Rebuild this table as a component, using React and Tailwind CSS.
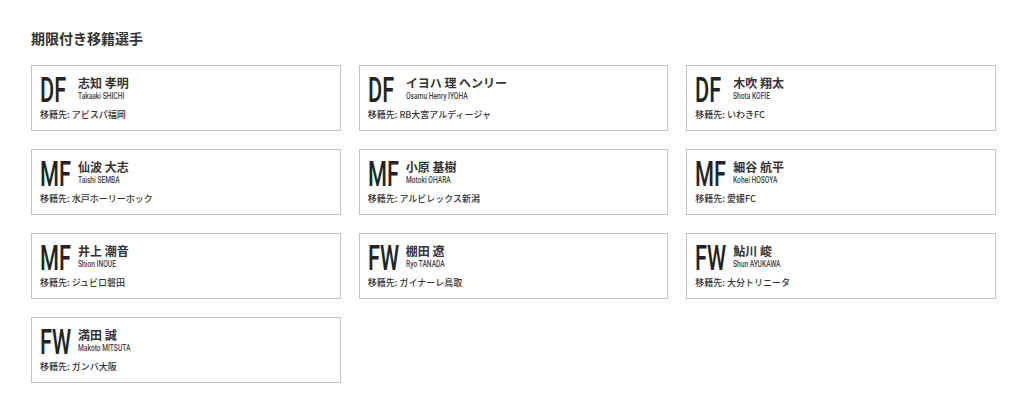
import React from "react";

const players = [
  { pos: "DF", name: "志知 孝明", en: "Takaaki SHICHI", club: "アビスパ福岡" },
  { pos: "DF", name: "イヨハ 理 ヘンリー", en: "Osamu Henry IYOHA", club: "RB大宮アルディージャ" },
  { pos: "DF", name: "木吹 翔太", en: "Shota KOFIE", club: "いわきFC" },
  { pos: "MF", name: "仙波 大志", en: "Taishi SEMBA", club: "水戸ホーリーホック" },
  { pos: "MF", name: "小原 基樹", en: "Motoki OHARA", club: "アルビレックス新潟" },
  { pos: "MF", name: "細谷 航平", en: "Kohei HOSOYA", club: "愛媛FC" },
  { pos: "MF", name: "井上 潮音", en: "Shion INOUE", club: "ジュビロ磐田" },
  { pos: "FW", name: "棚田 遼", en: "Ryo TANADA", club: "ガイナーレ鳥取" },
  { pos: "FW", name: "鮎川 峻", en: "Shun AYUKAWA", club: "大分トリニータ" },
  { pos: "FW", name: "満田 誠", en: "Makoto MITSUTA", club: "ガンバ大阪" },
];

const jp = { fontFamily: '"Noto Sans CJK JP", "Noto Sans", sans-serif' };
const latin = { fontFamily: 'Roboto, "Liberation Sans", Arial, sans-serif' };

const PlayerCard = ({ player }) => (
  <div className="h-[66px] border border-[#c4c4c4] bg-white pl-[8px] pt-[7px]">
    <div className="flex items-start">
      <div className="w-[38px] shrink-0">
        <span
          className="inline-block origin-left scale-x-[0.62] whitespace-nowrap text-[35px] leading-[35px] font-medium text-[#222]"
          style={latin}
        >
          {player.pos}
        </span>
      </div>
      <div className="flex flex-col pt-[2px]">
        <span className="text-[12px] leading-[16px] font-bold text-[#333] whitespace-nowrap" style={jp}>
          {player.name}
        </span>
        <span
          className="inline-block origin-left scale-x-[0.74] whitespace-nowrap text-[9px] leading-[10px] font-medium text-[#444]"
          style={latin}
        >
          {player.en}
        </span>
      </div>
    </div>
    <p className="mt-[1px] text-[9px] leading-[12px] font-medium text-[#333]" style={jp}>
      移籍先: {player.club}
    </p>
  </div>
);

export default function App() {
  return (
    <div className="w-[1024px] h-[405px] bg-white px-[31px] pt-[28px]">
      <h2 className="text-[14px] leading-[20px] font-bold text-[#333]" style={jp}>
        期限付き移籍選手
      </h2>
      <div className="mt-[17px] grid w-[965px] grid-cols-3 gap-[18px]">
        {players.map((p) => (
          <PlayerCard key={p.en} player={p} />
        ))}
      </div>
    </div>
  );
}
